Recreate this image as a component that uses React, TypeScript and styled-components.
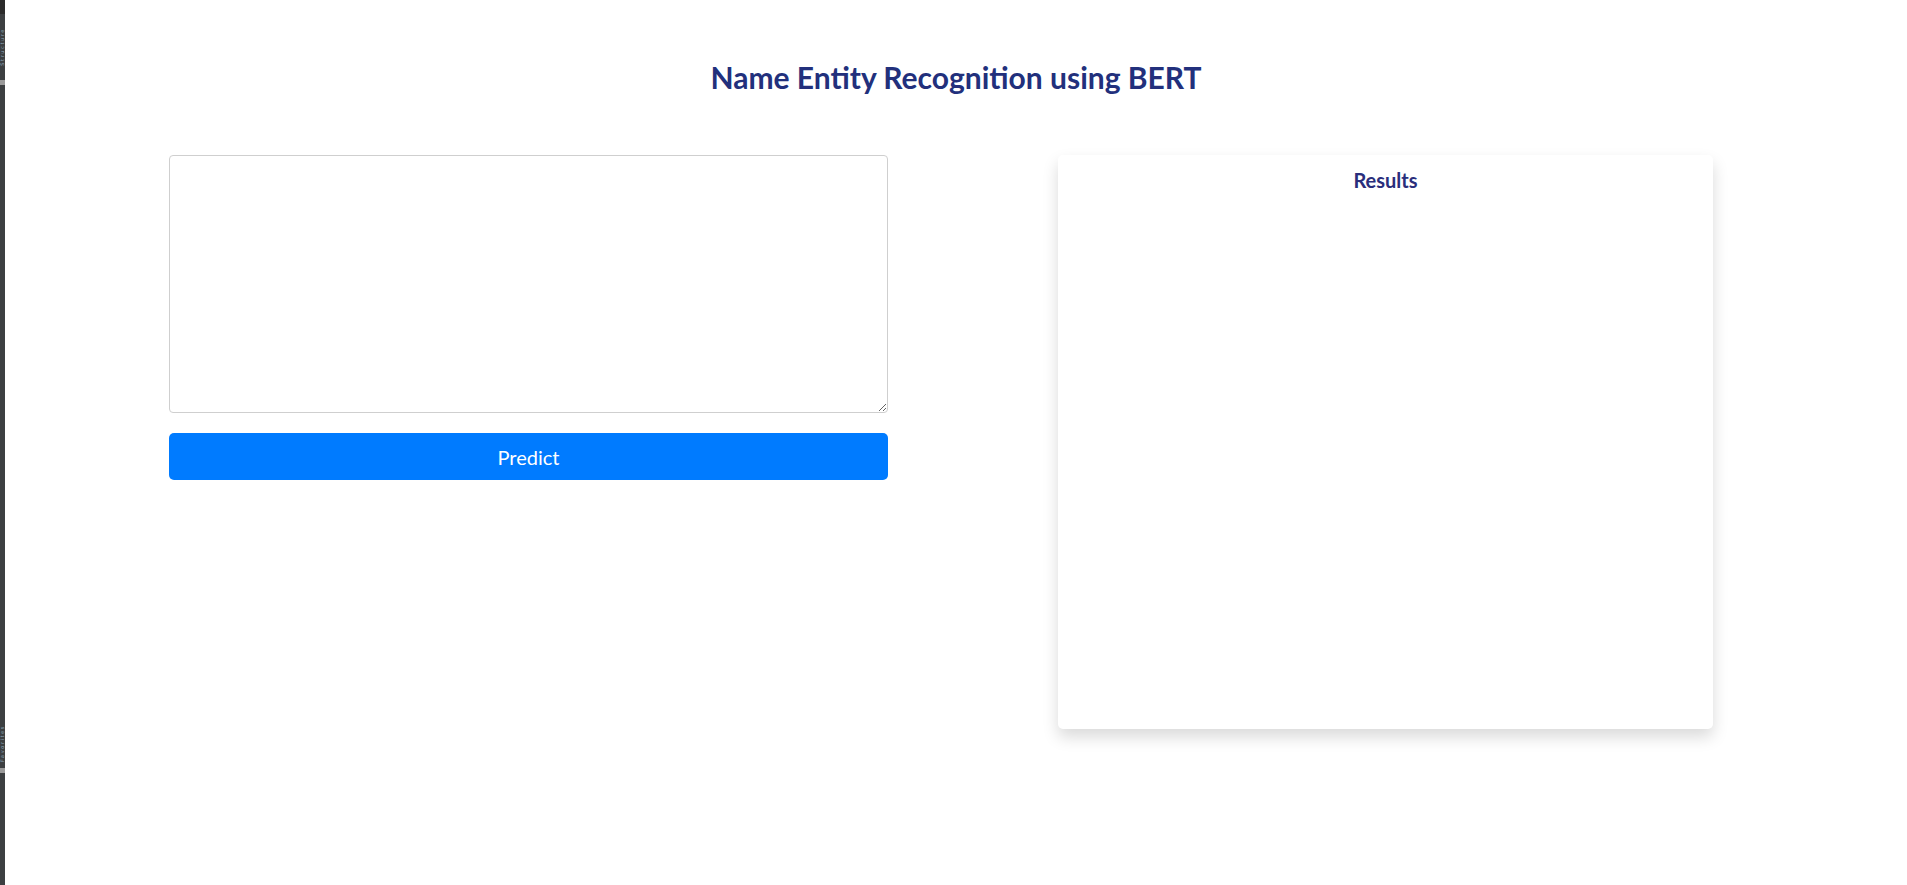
import styled, { createGlobalStyle } from "styled-components";

const GlobalStyle = createGlobalStyle`
  html, body {
    margin: 0;
    padding: 0;
    background: #ffffff;
  }
  body {
    font-family: Lato, "Open Sans", "Liberation Sans", sans-serif;
  }
  * {
    box-sizing: border-box;
  }
`;

const Page = styled.div`
  display: flex;
  height: 100vh;
  overflow: hidden;
`;

/* IDE tool strip peeking in on the left */
const ToolStrip = styled.div`
  width: 5px;
  flex: none;
  background: #3c3f41;
  display: flex;
  flex-direction: column;
  align-items: center;
  overflow: hidden;
`;

const StripTop = styled.div`
  width: 100%;
  height: 14px;
  background: #2b2b2b;
`;

const StripLabel = styled.div<{ $top: number }>`
  margin-top: ${(p) => p.$top}px;
  writing-mode: vertical-rl;
  transform: rotate(180deg);
  font-family: "DejaVu Sans", sans-serif;
  font-size: 5px;
  line-height: 5px;
  letter-spacing: 1.6px;
  color: #8fa6b8;
  white-space: nowrap;
`;

const StripMark = styled.div<{ $top: number }>`
  margin-top: ${(p) => p.$top}px;
  width: 5px;
  height: 5px;
  background: #9a9a9a;
`;

const Main = styled.main`
  flex: 1;
  padding-top: 59px;
`;

const Title = styled.h2`
  margin: 0;
  font-size: 30px;
  line-height: 1.2;
  font-weight: 700;
  color: #22307c;
  text-align: center;
`;

const Row = styled.div`
  display: grid;
  grid-template-columns: 719px 655px;
  column-gap: 170px;
  margin: 60px 0 0 164px;
  align-items: start;
`;

const InputColumn = styled.div`
  display: flex;
  flex-direction: column;
  gap: 20px;
`;

const TextInput = styled.textarea`
  width: 100%;
  height: 258px;
  border: 1px solid #cfcfcf;
  border-radius: 4px;
  padding: 8px 12px;
  font-family: Lato, "Liberation Sans", sans-serif;
  font-size: 16px;
  outline: none;
`;

const PredictButton = styled.button`
  height: 47px;
  width: 100%;
  border: none;
  border-radius: 5px;
  background: #007bff;
  color: #ffffff;
  font-family: Lato, "Liberation Sans", sans-serif;
  font-size: 20px;
  cursor: pointer;
`;

const ResultsCard = styled.section`
  height: 574px;
  background: #ffffff;
  border-radius: 5px;
  box-shadow: 0 8px 16px rgba(0, 0, 0, 0.15);
  padding-top: 10px;
`;

const ResultsTitle = styled.div`
  font-size: 20px;
  line-height: 1.5;
  font-weight: 700;
  color: #2a2e7c;
  text-align: center;
`;

export default function App() {
  return (
    <>
      <GlobalStyle />
      <Page>
        <ToolStrip>
          <StripTop />
          <StripLabel $top={14}>Structure</StripLabel>
          <StripMark $top={14} />
          <StripLabel $top={640}>Favorites</StripLabel>
          <StripMark $top={6} />
        </ToolStrip>
        <Main>
          <Title>Name Entity Recognition using BERT</Title>
          <Row>
            <InputColumn>
              <TextInput />
              <PredictButton>Predict</PredictButton>
            </InputColumn>
            <ResultsCard>
              <ResultsTitle>Results</ResultsTitle>
            </ResultsCard>
          </Row>
        </Main>
      </Page>
    </>
  );
}
